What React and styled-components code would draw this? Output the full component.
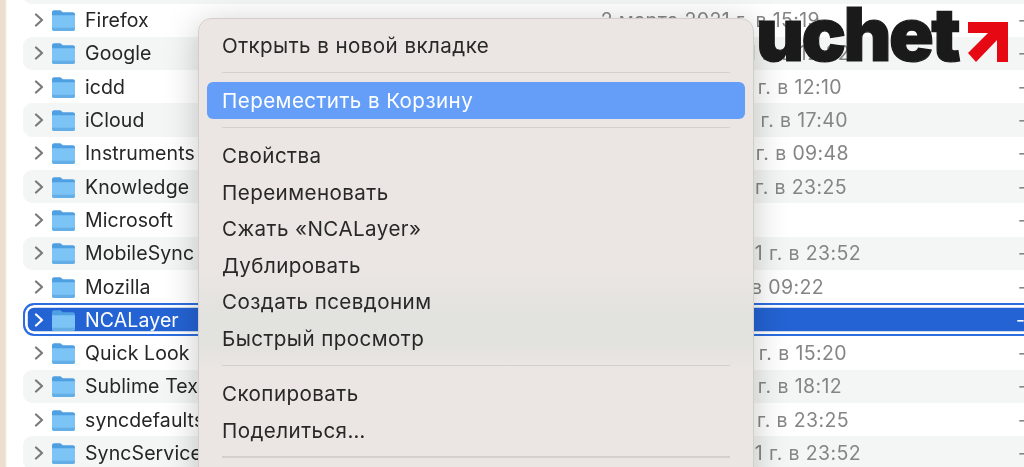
import React from "react";
import styled, { createGlobalStyle } from "styled-components";

const Global = createGlobalStyle`
  html, body { margin: 0; padding: 0; background: #fff; }
  body { font-family: Inter, "Noto Sans", "Liberation Sans", sans-serif; -webkit-font-smoothing: antialiased; }
  #root { width: 1024px; height: 467px; overflow: hidden; }
`;

const Screen = styled.div`
  position: relative;
  display: flex;
  width: 1024px;
  height: 467px;
  overflow: hidden;
  background: #fff;
  filter: blur(0.35px);
`;
const Desktop = styled.div`
  width: 7px;
  flex: none;
  background: linear-gradient(90deg, #ecdfd0 0 5px, #f4efe9 6px, #fff);
`;
const List = styled.div`
  flex: 1;
  min-width: 0;
  padding: 3.5px 0 0 16px;
  margin: -33.3px -12px 0 0;
`;
const Row = styled.div`
  display: flex;
  align-items: center;
  box-sizing: border-box;
  height: 33.3px;
  padding-left: 11px;
  border-radius: 9px;
  background: ${p => (p.$striped ? "#f4f5f5" : "#fff")};
  color: #262626;
  ${p => p.$selected && `
    background: #2463d3;
    color: #fff;
    border: 2px solid #2c6ddf;
    box-shadow: inset 0 0 0 2.8px #fff;
    padding-left: 9px;
    border-radius: 11px;
  `}
`;
const Chevron = styled.svg`
  width: 10px;
  height: 14px;
  flex: none;
  margin-right: 7px;
  fill: none;
  stroke: ${p => (p.$selected ? "#fff" : "#7a7a7a")};
  stroke-width: 2.2;
  stroke-linecap: round;
  stroke-linejoin: round;
`;
const FolderIcon = styled.svg`
  width: 25px;
  height: 24px;
  flex: none;
  margin-right: 9px;
`;
const Name = styled.span`
  width: 300px;
  flex: none;
  font-size: 19.5px;
  letter-spacing: 0.1px;
  white-space: nowrap;
`;
const DateText = styled.span`
  flex: none;
  box-sizing: border-box;
  font-size: 19.5px;
  letter-spacing: 0.38px;
  color: #858585;
  text-align: right;
  white-space: nowrap;
`;
const Dash = styled.span`
  margin-left: auto;
  font-size: 19.5px;
  color: ${p => (p.$selected ? "#fff" : "#858585")};
`;
const Menu = styled.div`
  position: absolute;
  left: 198px;
  top: 18px;
  width: 556px;
  height: 470px;
  box-sizing: border-box;
  padding: 8.3px 8px;
  background: linear-gradient(180deg, #ebe6e3 0 252px, #e2e2df 295px, #e2e2df 325px, #ebe6e3 350px);
  border: 1px solid #d2ceca;
  border-radius: 13px;
  box-shadow: 0 6px 34px rgba(0, 0, 0, 0.22);
`;
const Item = styled.div`
  display: flex;
  align-items: center;
  height: 36.6px;
  padding-left: 15px;
  border-radius: 6px;
  font-size: 20.6px;
  letter-spacing: 0.42px;
  color: ${p => (p.$active ? "#fff" : "#2a2826")};
  background: ${p => (p.$active ? "#649ef8" : "transparent")};
`;
const Separator = styled.div`
  height: 1.6px;
  margin: 7.8px 15px 9px;
  background: #d5d0cc;
`;
const Logo = styled.div`
  position: absolute;
  left: 756px;
  top: 0;
  display: flex;
  align-items: flex-end;
  gap: 10px;
  height: 62px;
`;
const LogoWord = styled.span`
  font-family: Inter, "Liberation Sans", sans-serif;
  font-weight: 900;
  font-size: 74px;
  line-height: 62px;
  height: 62px;
  margin-bottom: -3px;
  letter-spacing: -2.6px;
  color: #1a1a1a;
  -webkit-text-stroke: 1.2px #1a1a1a;
`;
const LogoArrow = styled.svg`
  width: 40px;
  height: 40px;
  flex: none;
  margin-bottom: 0.5px;
`;

const rows = [
  { name: "Firefox", date: "2 марта 2021 г. в 15:19", end: 819 },
  { name: "Google", date: "2 марта 2021 г. в 12:22", end: 849, striped: true },
  { name: "icdd", date: "2 марта 2021 г. в 12:10", end: 841 },
  { name: "iCloud", date: "2 марта 2021 г. в 17:40", end: 847, striped: true },
  { name: "Instruments", date: "2 марта 2021 г. в 09:48", end: 848 },
  { name: "Knowledge", date: "2 марта 2021 г. в 23:25", end: 846, striped: true },
  { name: "Microsoft" },
  { name: "MobileSync", date: "2 марта 2021 г. в 23:52", end: 860, striped: true },
  { name: "Mozilla", date: "2 марта 2021 г. в 09:22", end: 823 },
  { name: "NCALayer", selected: true },
  { name: "Quick Look", date: "2 марта 2021 г. в 15:20", end: 846 },
  { name: "Sublime Text", date: "2 марта 2021 г. в 18:12", end: 841, striped: true },
  { name: "syncdefaults", date: "2 марта 2021 г. в 23:25", end: 848 },
  { name: "SyncServices", date: "2 марта 2021 г. в 23:52", end: 860, striped: true },
];

const NAME_END = 84 + 300;

const Folder = () => (
  <FolderIcon viewBox="0 0 25 24">
    <path d="M1 4.500C1 3.200 1.900 2.300 3.200 2.300h5.600c.8 0 1.300.3 1.900.9l1 1h10.100c1.300 0 2.200.9 2.200 2.200v14.400c0 1.300-.9 2.200-2.200 2.200H3.200C1.900 23 1 22.100 1 20.800Z" fill="#4f9fe3" />
    <path d="M1 7.200h23v13.600c0 1.300-.9 2.200-2.200 2.200H3.200C1.900 23 1 22.100 1 20.800Z" fill="#7cc3f6" />
    <path d="M1 19.800h23v1c0 1.300-.9 2.200-2.200 2.200H3.200C1.900 23 1 22.100 1 20.800Z" fill="#63aee6" />
  </FolderIcon>
);

const menuGroups = [
  [{ t: "Открыть в новой вкладке" }],
  [{ t: "Переместить в Корзину", active: true }],
  [
    { t: "Свойства" },
    { t: "Переименовать" },
    { t: "Сжать «NCALayer»" },
    { t: "Дублировать" },
    { t: "Создать псевдоним" },
    { t: "Быстрый просмотр" },
  ],
  [{ t: "Скопировать" }, { t: "Поделиться…" }],
  [{ t: "Теги…" }],
];

export default function App() {
  return (
    <>
      <Global />
      <Screen>
        <Desktop />
        <List>
          <Row $striped />
          {rows.map(r => (
            <Row key={r.name} $striped={r.striped} $selected={r.selected}>
              <Chevron viewBox="0 0 10 14" $selected={r.selected}>
                <path d="M2 1.500 8 7l-6 5.500" />
              </Chevron>
              <Folder />
              <Name>{r.name}</Name>
              {r.date && <DateText style={{ width: r.end - NAME_END }}>{r.date}</DateText>}
              <Dash $selected={r.selected}>--</Dash>
            </Row>
          ))}
        </List>
        <Menu>
          {menuGroups.map((g, i) => (
            <React.Fragment key={i}>
              {i > 0 && <Separator />}
              {g.map(it => (
                <Item key={it.t} $active={it.active}>{it.t}</Item>
              ))}
            </React.Fragment>
          ))}
        </Menu>
        <Logo>
          <LogoWord>uchet</LogoWord>
          <LogoArrow viewBox="0 0 40 40">
            <path d="M0 0H40V40H29V18L8 40L0 31L20 11H0Z" fill="#e60812" />
          </LogoArrow>
        </Logo>
      </Screen>
    </>
  );
}
